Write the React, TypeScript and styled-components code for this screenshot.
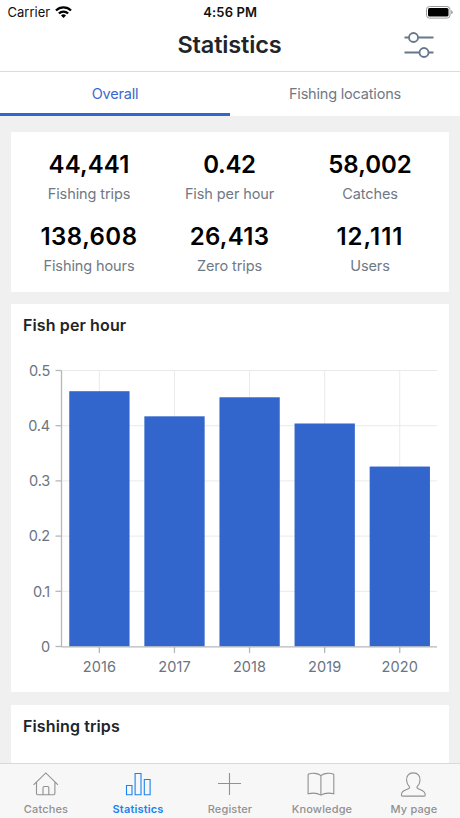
import React from 'react';
import styled, { createGlobalStyle } from 'styled-components';

const GlobalStyle = createGlobalStyle`
  * { box-sizing: border-box; }
  body { margin: 0; background: #f0f0f0; font-family: Inter, "Liberation Sans", sans-serif; }
`;

const Screen = styled.div`
  display: flex;
  flex-direction: column;
  width: 460px;
  height: 818px;
  overflow: hidden;
  background: #f0f0f0;
`;

const StatusBar = styled.header`
  display: grid;
  grid-template-columns: 1fr auto 1fr;
  align-items: center;
  flex: none;
  height: 24px;
  padding: 0 7px 0 7.5px;
  background: #fff;
  color: #111;
  font-size: 13px;
`;

const Carrier = styled.span`
  display: flex;
  align-items: center;
  gap: 5px;
`;

const Clock = styled.span`
  font-weight: 600;
  letter-spacing: 0.15px;
`;

const BatterySlot = styled.span`
  display: flex;
  justify-content: flex-end;
`;

const TitleBar = styled.div`
  display: grid;
  grid-template-columns: 1fr auto 1fr;
  align-items: center;
  flex: none;
  height: 48px;
  padding: 0 26px 6px 25px;
  background: #fff;
  border-bottom: 1px solid #d9dbdd;
`;

const Title = styled.h1`
  grid-column: 2;
  margin: 0;
  color: #212529;
  font-size: 23.5px;
  line-height: 32px;
  font-weight: 600;
  letter-spacing: -0.15px;
`;

const FilterButton = styled.button`
  display: flex;
  justify-self: end;
  padding: 0;
  border: 0;
  background: none;
`;

const Tabs = styled.nav`
  display: grid;
  grid-template-columns: 1fr 1fr;
  flex: none;
  height: 44px;
  background: #fff;
`;

const Tab = styled.a<{ $active?: boolean }>`
  display: flex;
  align-items: center;
  justify-content: center;
  padding-top: 2px;
  border-bottom: 3px solid ${(p) => (p.$active ? '#3366cc' : 'transparent')};
  color: ${(p) => (p.$active ? '#3c69cb' : '#6f7985')};
  font-size: 14.5px;
  letter-spacing: -0.19px;
`;

const Content = styled.main`
  display: flex;
  flex-direction: column;
  gap: 12.4px;
  flex: 1;
  min-height: 0;
  overflow: hidden;
  padding: 16px 11px 0;
`;

const Card = styled.section<{ $height: number }>`
  flex: none;
  height: ${(p) => p.$height}px;
  background: #fff;
`;

const StatGrid = styled.div`
  display: grid;
  grid-template-columns: repeat(3, 140.5px);
  grid-auto-rows: 72px;
  justify-content: center;
  padding: 17px 1px 0 0;
`;

const Stat = styled.div`
  text-align: center;
`;

const StatValue = styled.div<{ $tracking: number }>`
  color: #000;
  font-size: 24px;
  line-height: 32px;
  font-weight: 600;
  letter-spacing: ${(p) => p.$tracking}px;
`;

const StatLabel = styled.div`
  color: #6f7985;
  font-size: 14.5px;
  line-height: 20px;
  padding-top: 3px;
  letter-spacing: -0.1px;
`;

const CardTitle = styled.h2`
  margin: 0;
  padding: 11px 12px 0;
  color: #212529;
  font-size: 16px;
  line-height: 20px;
  font-weight: 600;
  letter-spacing: 0.12px;
`;

const Chart = styled.svg`
  display: block;
  margin-top: 24.6px;
  font-family: Inter, sans-serif;
  font-size: 14.5px;
  fill: #6a7582;
`;

const TabBar = styled.nav`
  display: grid;
  grid-template-columns: repeat(5, 1fr);
  flex: none;
  height: 55px;
  border-top: 1px solid #d9d9d9;
  background: #f7f7f7;
`;

const TabItem = styled.a<{ $active?: boolean }>`
  display: flex;
  flex-direction: column;
  align-items: center;
  padding-top: 4px;
  color: ${(p) => (p.$active ? '#1a82f0' : '#919191')};
  font-size: 11px;
  line-height: 14px;
  font-weight: ${(p) => (p.$active ? 600 : 500)};
  letter-spacing: 0.15px;
`;

const TabIcon = styled.svg`
  width: 32px;
  height: 32px;
  margin-bottom: 2px;
  fill: none;
  stroke: currentColor;
  stroke-width: 1.1;
`;

const stats = [
  { value: '44,441', label: 'Fishing trips', tracking: 0.1 },
  { value: '0.42', label: 'Fish per hour', tracking: -0.3 },
  { value: '58,002', label: 'Catches', tracking: 0 },
  { value: '138,608', label: 'Fishing hours', tracking: 0.45 },
  { value: '26,413', label: 'Zero trips', tracking: 0.3 },
  { value: '12,111', label: 'Users', tracking: 1 },
];

const bars = [
  { year: 2016, value: 0.4625 },
  { year: 2017, value: 0.417 },
  { year: 2018, value: 0.4515 },
  { year: 2019, value: 0.404 },
  { year: 2020, value: 0.326 },
];

const gridValues = [0, 0.1, 0.2, 0.3, 0.4, 0.5];

const plot = { left: 50.5, right: 426, top: 10.5, bottom: 286.5 };
const step = (plot.right - plot.left) / bars.length;
const yOf = (v: number) => plot.bottom - (v / 0.5) * (plot.bottom - plot.top);
const xOf = (i: number) => plot.left + step * (i + 0.5) + 0.3;

function BarChart() {
  return (
    <Chart width="438" height="328" viewBox="0 0 438 328">
      <g stroke="#e9eaeb" strokeWidth="1">
        {gridValues.slice(1).map((v) => (
          <line key={v} x1={plot.left} x2={plot.right} y1={yOf(v)} y2={yOf(v)} />
        ))}
        {bars.map((b, i) => (
          <line key={b.year} x1={xOf(i)} x2={xOf(i)} y1={plot.top} y2={plot.bottom} />
        ))}
      </g>
      {bars.map((b, i) => (
        <rect key={b.year} x={xOf(i) - 30.1} y={yOf(b.value)} width="60.3" height={plot.bottom - yOf(b.value)} fill="#3366cc" />
      ))}
      <g stroke="#b5b7b9" strokeWidth="1.3">
        <line x1={plot.left} x2={plot.left} y1={plot.top} y2={plot.bottom + 0.6} />
        <line x1={plot.left} x2={plot.right} y1={plot.bottom + 0.3} y2={plot.bottom + 0.3} />
        {gridValues.map((v) => (
          <line key={v} x1={plot.left - 6} x2={plot.left} y1={yOf(v)} y2={yOf(v)} />
        ))}
        {bars.map((b, i) => (
          <line key={b.year} x1={xOf(i)} x2={xOf(i)} y1={plot.bottom} y2={plot.bottom + 6.5} />
        ))}
      </g>
      {gridValues.map((v) => (
        <text key={v} x="39" y={yOf(v) + 5.3} textAnchor="end" letterSpacing="-0.2">{v}</text>
      ))}
      {bars.map((b, i) => (
        <text key={b.year} x={xOf(i)} y={plot.bottom + 25} textAnchor="middle" letterSpacing="0.1">{b.year}</text>
      ))}
    </Chart>
  );
}

const navItems = [
  {
    label: 'Catches',
    icon: <path d="M3.600 16.800 15.800 4.900 28 16.800M24.900 13.800v11.700q0 1.200-1.200 1.200H7.700q-1.200 0-1.200-1.200V13.800M13 26.700v-7q0-1.200 1.200-1.200h3.400q1.200 0 1.200 1.200v7" />,
  },
  {
    label: 'Statistics',
    icon: <path d="M4.500 17.500h5.500v9.200H4.500zM13.100 5.500h5.900v21.200h-5.900zM22.300 11.500h5.800v15.200h-5.800z" />,
  },
  { label: 'Register', icon: <path d="M15.500 5v22M4 15.500h23" /> },
  {
    label: 'Knowledge',
    icon: <path d="M14.900 7.700C12 5.100 6 4.700 2.800 5.900q-.7.300-.7 1v18.900c4-1 9-1 12.800 1.300 3.800-2.300 8.900-2.300 12.900-1.300V6.900q0-.7-.7-1C23.900 4.700 17.800 5.100 14.900 7.700zM14.900 7.700V27" />,
  },
  {
    label: 'My page',
    icon: <path d="M15.300 4.900c-4.900 0-7 3.500-6.700 7.600.2 2.500 1.100 4.500 2.700 6 1.100 1.400-.2 2.200-2.600 3-3.500 1.100-5.300 2.300-5.300 5.400 0 .8.300 1.200 1 1.200h21.800c.7 0 1-.4 1-1.200 0-3.100-1.800-4.300-5.300-5.400-2.400-.8-3.700-1.600-2.600-3 1.600-1.500 2.500-3.500 2.700-6 .3-4.100-1.800-7.600-6.700-7.600z" />,
  },
];

export default function App() {
  return (
    <>
      <GlobalStyle />
      <Screen>
        <StatusBar>
          <Carrier>
            Carrier
            <svg width="17" height="13" viewBox="0 0 17 13" fill="none" stroke="#000" strokeWidth="2.3">
              <path d="M1 4.500a10.700 10.700 0 0 1 15 0M3.900 7.500a6.500 6.500 0 0 1 9.200 0" />
              <path d="M6 9.500a3.600 3.600 0 0 1 5 0L8.500 12.100z" fill="#000" stroke="none" />
            </svg>
          </Carrier>
          <Clock>4:56 PM</Clock>
          <BatterySlot>
            <svg width="27" height="13" viewBox="0 0 27 13">
              <rect x="0.500" y="0.500" width="23.500" height="11.600" rx="3" fill="none" stroke="#9a9a9a" />
              <rect x="2" y="2" width="20.500" height="8.600" rx="1.600" />
              <path d="M25.200 4.300q1.500.5 1.500 2t-1.500 2z" fill="#9a9a9a" />
            </svg>
          </BatterySlot>
        </StatusBar>
        <TitleBar>
          <Title>Statistics</Title>
          <FilterButton aria-label="Filter">
            <svg width="30" height="28" viewBox="0 0 30 28" fill="none" stroke="#66788a" strokeWidth="1.800">
              <path d="M0.500 6.500h4.500M14 6.500h15.500M0.500 21.500h14.800M24.500 21.500h5" />
              <circle cx="9.500" cy="6.500" r="4.500" />
              <circle cx="20" cy="21.500" r="4.500" />
            </svg>
          </FilterButton>
        </TitleBar>
        <Tabs>
          <Tab $active>Overall</Tab>
          <Tab>Fishing locations</Tab>
        </Tabs>
        <Content>
          <Card $height={160}>
            <StatGrid>
              {stats.map(({ value, label, tracking }) => (
                <Stat key={label}>
                  <StatValue $tracking={tracking}>{value}</StatValue>
                  <StatLabel>{label}</StatLabel>
                </Stat>
              ))}
            </StatGrid>
          </Card>
          <Card $height={388}>
            <CardTitle>Fish per hour</CardTitle>
            <BarChart />
          </Card>
          <Card $height={388}>
            <CardTitle>Fishing trips</CardTitle>
          </Card>
        </Content>
        <TabBar>
          {navItems.map(({ label, icon }) => (
            <TabItem key={label} $active={label === 'Statistics'}>
              <TabIcon viewBox="0 0 32 32">{icon}</TabIcon>
              {label}
            </TabItem>
          ))}
        </TabBar>
      </Screen>
    </>
  );
}
